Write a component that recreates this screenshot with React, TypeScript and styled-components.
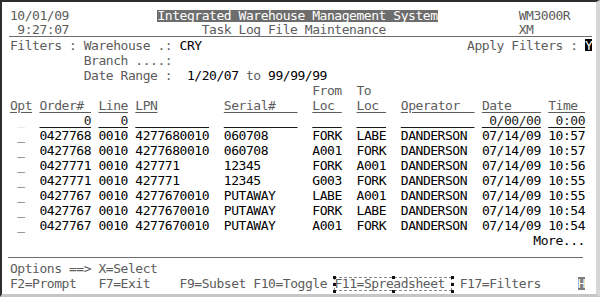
import React from 'react'
import styled, { createGlobalStyle, css } from 'styled-components'

type Kind = 'label' | 'value' | 'head' | 'field' | 'title' | 'cursor' | 'key' | 'opt' | 'ghost' | 'selected'

type Seg = {
  col: number,
  text: string,
  kind?: Kind,
}

const GlobalStyle = createGlobalStyle`
  html, body {
    margin:0;
    padding:0;
    background:#fff;
  }
`

const Screen = styled.div`
  width:600px;
  height:297px;
  box-sizing:border-box;
  border-top:2px solid #2e2e2e;
  border-left:2px solid #2e2e2e;
  border-right:4px solid #d6d6d6;
  border-bottom:3px solid #c6c6c6;
  padding-top:6px;
  font-family:"DejaVu Sans Mono", monospace;
  font-size:13px;
  letter-spacing:-0.455px;
  color:#5c5c5c;
  overflow:hidden;
  display:flex;
  flex-direction:column;
`

const Line = styled.div<{ $short?: boolean }>`
  height:${p => p.$short ? 13 : 15}px;
  line-height:${p => p.$short ? 13 : 15}px;
  white-space:pre;
  padding-left:0.6px;
`

const Rule = styled.div<{ $left: number, $right: number, $top?: number, $bottom?: number }>`
  height:0;
  border-top:1px solid #6c6c6c;
  margin:${p => p.$top || 0}px ${p => p.$right}px ${p => p.$bottom || 0}px ${p => p.$left}px;
`

const kindStyles: Record<string, ReturnType<typeof css>> = {
  label: css`color:#5c5c5c;`,
  value: css`color:#000;`,
  head: css`
    color:#5c5c5c;
    text-decoration:underline;
    text-underline-offset:2px;
  `,
  field: css`
    color:#1a1a1a;
    text-decoration:underline;
    text-underline-offset:2px;
  `,
  title: css`
    display:inline-block;
    line-height:12px;
    background:#6d6d6d;
    color:#fff;
  `,
  cursor: css`
    display:inline-block;
    line-height:13px;
    background:#000;
    color:#fff;
    text-decoration:underline;
  `,
  key: css`
    display:inline-block;
    line-height:13px;
    background:#7c7c7c;
    color:#fff;
  `,
  opt: css`color:#3a3a3a;`,
  ghost: css`color:#dcdcdc;`,
  selected: css``,
}

const Text = styled.span<{ $kind: Kind }>`
  ${p => kindStyles[p.$kind]}
`

const SelectBox = styled.span`
  position:relative;
  display:inline-block;
  line-height:14px;
  outline:1px dashed #8a8a8a;
  outline-offset:-1px;
`

const Handle = styled.i<{ $x: string, $y: string }>`
  position:absolute;
  left:${p => p.$x};
  top:${p => p.$y};
  width:3px;
  height:3px;
  margin:-1.5px 0 0 -1.5px;
  background:#111;
`

const HANDLES = [
  ['0%', '0%'], ['50%', '0%'], ['100%', '0%'],
  ['0%', '50%'], ['100%', '50%'],
  ['0%', '100%'], ['50%', '100%'], ['100%', '100%'],
]

function Row({ segs, short }: { segs: Seg[], short?: boolean }) {
  let pos = 0
  const parts: React.ReactNode[] = []
  segs.forEach((s, i) => {
    if (s.col > pos) parts.push(' '.repeat(s.col - pos))
    const kind = s.kind || 'label'
    if (kind === 'selected') {
      parts.push(
        <SelectBox key={i}>
          {s.text}
          {HANDLES.map(([x, y]) => <Handle key={x + y} $x={x} $y={y} />)}
        </SelectBox>
      )
    } else {
      parts.push(<Text key={i} $kind={kind}>{s.text}</Text>)
    }
    pos = s.col + s.text.length
  })
  return <Line $short={short}>{parts}</Line>
}

const DATA = [
  ['0427768', '0010', '4277680010', '060708', 'FORK', 'LABE', '10:57'],
  ['0427768', '0010', '4277680010', '060708', 'A001', 'FORK', '10:57'],
  ['0427771', '0010', '427771', '12345', 'FORK', 'A001', '10:56'],
  ['0427771', '0010', '427771', '12345', 'G003', 'FORK', '10:55'],
  ['0427767', '0010', '4277670010', 'PUTAWAY', 'LABE', 'A001', '10:55'],
  ['0427767', '0010', '4277670010', 'PUTAWAY', 'FORK', 'LABE', '10:54'],
  ['0427767', '0010', '4277670010', 'PUTAWAY', 'A001', 'FORK', '10:54'],
]

const dataRow = (r: string[]): Seg[] => [
  { col: 2, text: '_', kind: 'opt' },
  { col: 5, text: r[0], kind: 'value' },
  { col: 13, text: r[1], kind: 'value' },
  { col: 18, text: r[2], kind: 'value' },
  { col: 30, text: r[3], kind: 'value' },
  { col: 42, text: r[4], kind: 'value' },
  { col: 48, text: r[5], kind: 'value' },
  { col: 54, text: 'DANDERSON', kind: 'value' },
  { col: 65, text: '07/14/09', kind: 'value' },
  { col: 74, text: r[6], kind: 'value' },
]

export default function App() {
  return (
    <>
      <GlobalStyle />
      <Screen>
        <Row segs={[
          { col: 1, text: '10/01/09' },
          { col: 21, text: 'Integrated Warehouse Management System', kind: 'title' },
          { col: 70, text: 'WM3000R' },
        ]} />
        <Row short segs={[
          { col: 2, text: '9:27:07' },
          { col: 27, text: 'Task Log File Maintenance' },
          { col: 70, text: 'XM' },
        ]} />
        <Rule $left={7} $right={4} $bottom={1} />

        <Row segs={[
          { col: 1, text: 'Filters :' },
          { col: 11, text: 'Warehouse .:' },
          { col: 24, text: 'CRY', kind: 'value' },
          { col: 63, text: 'Apply Filters :' },
          { col: 79, text: 'Y', kind: 'cursor' },
        ]} />
        <Row segs={[{ col: 11, text: 'Branch ....:' }]} />
        <Row segs={[
          { col: 11, text: 'Date Range :' },
          { col: 25, text: '1/20/07', kind: 'value' },
          { col: 33, text: 'to' },
          { col: 36, text: '99/99/99', kind: 'value' },
        ]} />
        <Row segs={[
          { col: 42, text: 'From' },
          { col: 48, text: 'To' },
        ]} />
        <Row segs={[
          { col: 1, text: 'Opt', kind: 'head' },
          { col: 5, text: 'Order# ', kind: 'head' },
          { col: 13, text: 'Line', kind: 'head' },
          { col: 18, text: 'LPN', kind: 'head' },
          { col: 30, text: 'Serial#   ', kind: 'head' },
          { col: 42, text: 'Loc ', kind: 'head' },
          { col: 48, text: 'Loc ', kind: 'head' },
          { col: 54, text: 'Operator  ', kind: 'head' },
          { col: 65, text: 'Date    ', kind: 'head' },
          { col: 74, text: 'Time ', kind: 'head' },
        ]} />
        <Row segs={[
          { col: 2, text: '_', kind: 'ghost' },
          { col: 5, text: '      0', kind: 'field' },
          { col: 13, text: '   0', kind: 'field' },
          { col: 18, text: '          ', kind: 'field' },
          { col: 30, text: '          ', kind: 'field' },
          { col: 42, text: '    ', kind: 'field' },
          { col: 48, text: '    ', kind: 'field' },
          { col: 54, text: '          ', kind: 'field' },
          { col: 65, text: ' 0/00/00', kind: 'field' },
          { col: 74, text: ' 0:00', kind: 'field' },
        ]} />
        {DATA.map((r, i) => <Row key={i} segs={dataRow(r)} />)}
        <Row segs={[{ col: 72, text: 'More...', kind: 'value' }]} />

        <Rule $left={6} $right={13} $top={9} $bottom={3} />
        <Row segs={[{ col: 1, text: 'Options ==> X=Select' }]} />
        <Row segs={[
          { col: 1, text: 'F2=Prompt' },
          { col: 13, text: 'F7=Exit' },
          { col: 24, text: 'F9=Subset' },
          { col: 34, text: 'F10=Toggle' },
          { col: 45, text: 'F11=Spreadsheet ', kind: 'selected' },
          { col: 62, text: 'F17=Filters' },
          { col: 78, text: 'H', kind: 'key' },
        ]} />
      </Screen>
    </>
  )
}
